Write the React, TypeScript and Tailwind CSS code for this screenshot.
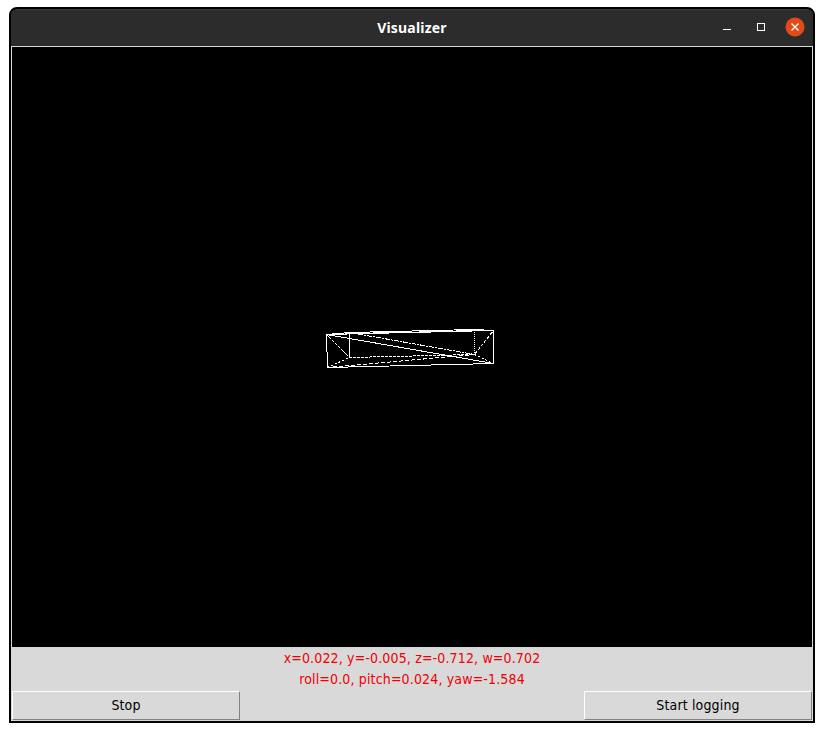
type Edge = { from: [number, number]; to: [number, number]; dash?: string };

const edges: Edge[] = [
  { from: [314, 287], to: [481, 283] },
  { from: [314, 287], to: [462, 283] },
  { from: [337, 286], to: [481, 283] },
  { from: [314, 287], to: [337, 285] },
  { from: [337, 285], to: [462, 282] },
  { from: [462, 282], to: [481, 283] },
  { from: [481, 283], to: [481, 316] },
  { from: [315, 320], to: [481, 316] },
  { from: [314, 287], to: [315, 320] },
  { from: [337, 285], to: [337, 310] },
  { from: [314, 287], to: [481, 316] },
  { from: [462, 307], to: [481, 283], dash: "4 1" },
  { from: [337, 310], to: [462, 307], dash: "3 1" },
  { from: [462, 282], to: [462, 307], dash: "1 1" },
  { from: [314, 287], to: [337, 310], dash: "3 1" },
  { from: [315, 320], to: [337, 310], dash: "2 2" },
  { from: [315, 320], to: [462, 307], dash: "4 2" },
  { from: [337, 285], to: [462, 307], dash: "5 1 2 1" },
  { from: [462, 307], to: [481, 316], dash: "2 2" },
];

function Wireframe() {
  return (
    <svg width="800" height="600" className="block bg-black" shapeRendering="crispEdges">
      {edges.map(({ from, to, dash }, i) => (
        <line
          key={i}
          x1={from[0] + 0.5}
          y1={from[1] + 0.5}
          x2={to[0] + 0.5}
          y2={to[1] + 0.5}
          stroke="#fff"
          strokeWidth="1"
          strokeLinecap={dash ? "butt" : "square"}
          strokeDasharray={dash}
        />
      ))}
    </svg>
  );
}

function TitleBar() {
  return (
    <header className="grid h-[37px] shrink-0 grid-cols-[1fr_auto_1fr] items-center rounded-t-[6px] border-t border-[#383838] bg-[#2c2c2c] pb-[2px]">
      <span />
      <h1 className="pt-px font-['Noto_Sans',sans-serif] text-[14px] leading-5 font-bold tracking-[0.2px] text-white">
        Visualizer
      </h1>
      <div className="flex justify-end pr-[8px]">
        <svg width="86" height="20" viewBox="0 0 86 20" fill="none">
          <path d="M4 12.5h8" stroke="#fff" shapeRendering="crispEdges" />
          <rect x="38.5" y="6.5" width="7" height="7" stroke="#fff" shapeRendering="crispEdges" />
          <circle cx="76" cy="10" r="9.5" fill="#e24a19" />
          <path d="M72.5 6.5l7 7m0-7l-7 7" stroke="#fff" strokeWidth="1.4" />
        </svg>
      </div>
    </header>
  );
}

function Button({ label }: { label: string }) {
  return (
    <button className="h-[29px] w-[228px] border border-t-white border-r-[#828282] border-b-[#828282] border-l-white bg-[#d9d9d9] pb-px text-center text-[14px] leading-[26px] tracking-[0.15px] text-black">
      {label}
    </button>
  );
}

export default function App() {
  return (
    <div className="h-[732px] w-[824px] overflow-hidden bg-white pt-[7px] pl-[9px] font-['DejaVu_Sans_Condensed','DejaVu_Sans',sans-serif]">
      <div className="flex h-[716px] w-[806px] flex-col rounded-t-[8px] border-2 border-black bg-black">
        <TitleBar />
        <main className="flex flex-1 flex-col bg-[#d9d9d9] px-px pt-px">
          <Wireframe />
          <div className="h-[44px] pt-px text-center text-[14px] leading-[21px] tracking-[0.15px] text-[#f00000]">
            <p>x=0.022, y=-0.005, z=-0.712, w=0.702</p>
            <p>roll=0.0, pitch=0.024, yaw=-1.584</p>
          </div>
          <div className="flex justify-between">
            <Button label="Stop" />
            <Button label="Start logging" />
          </div>
        </main>
      </div>
    </div>
  );
}
